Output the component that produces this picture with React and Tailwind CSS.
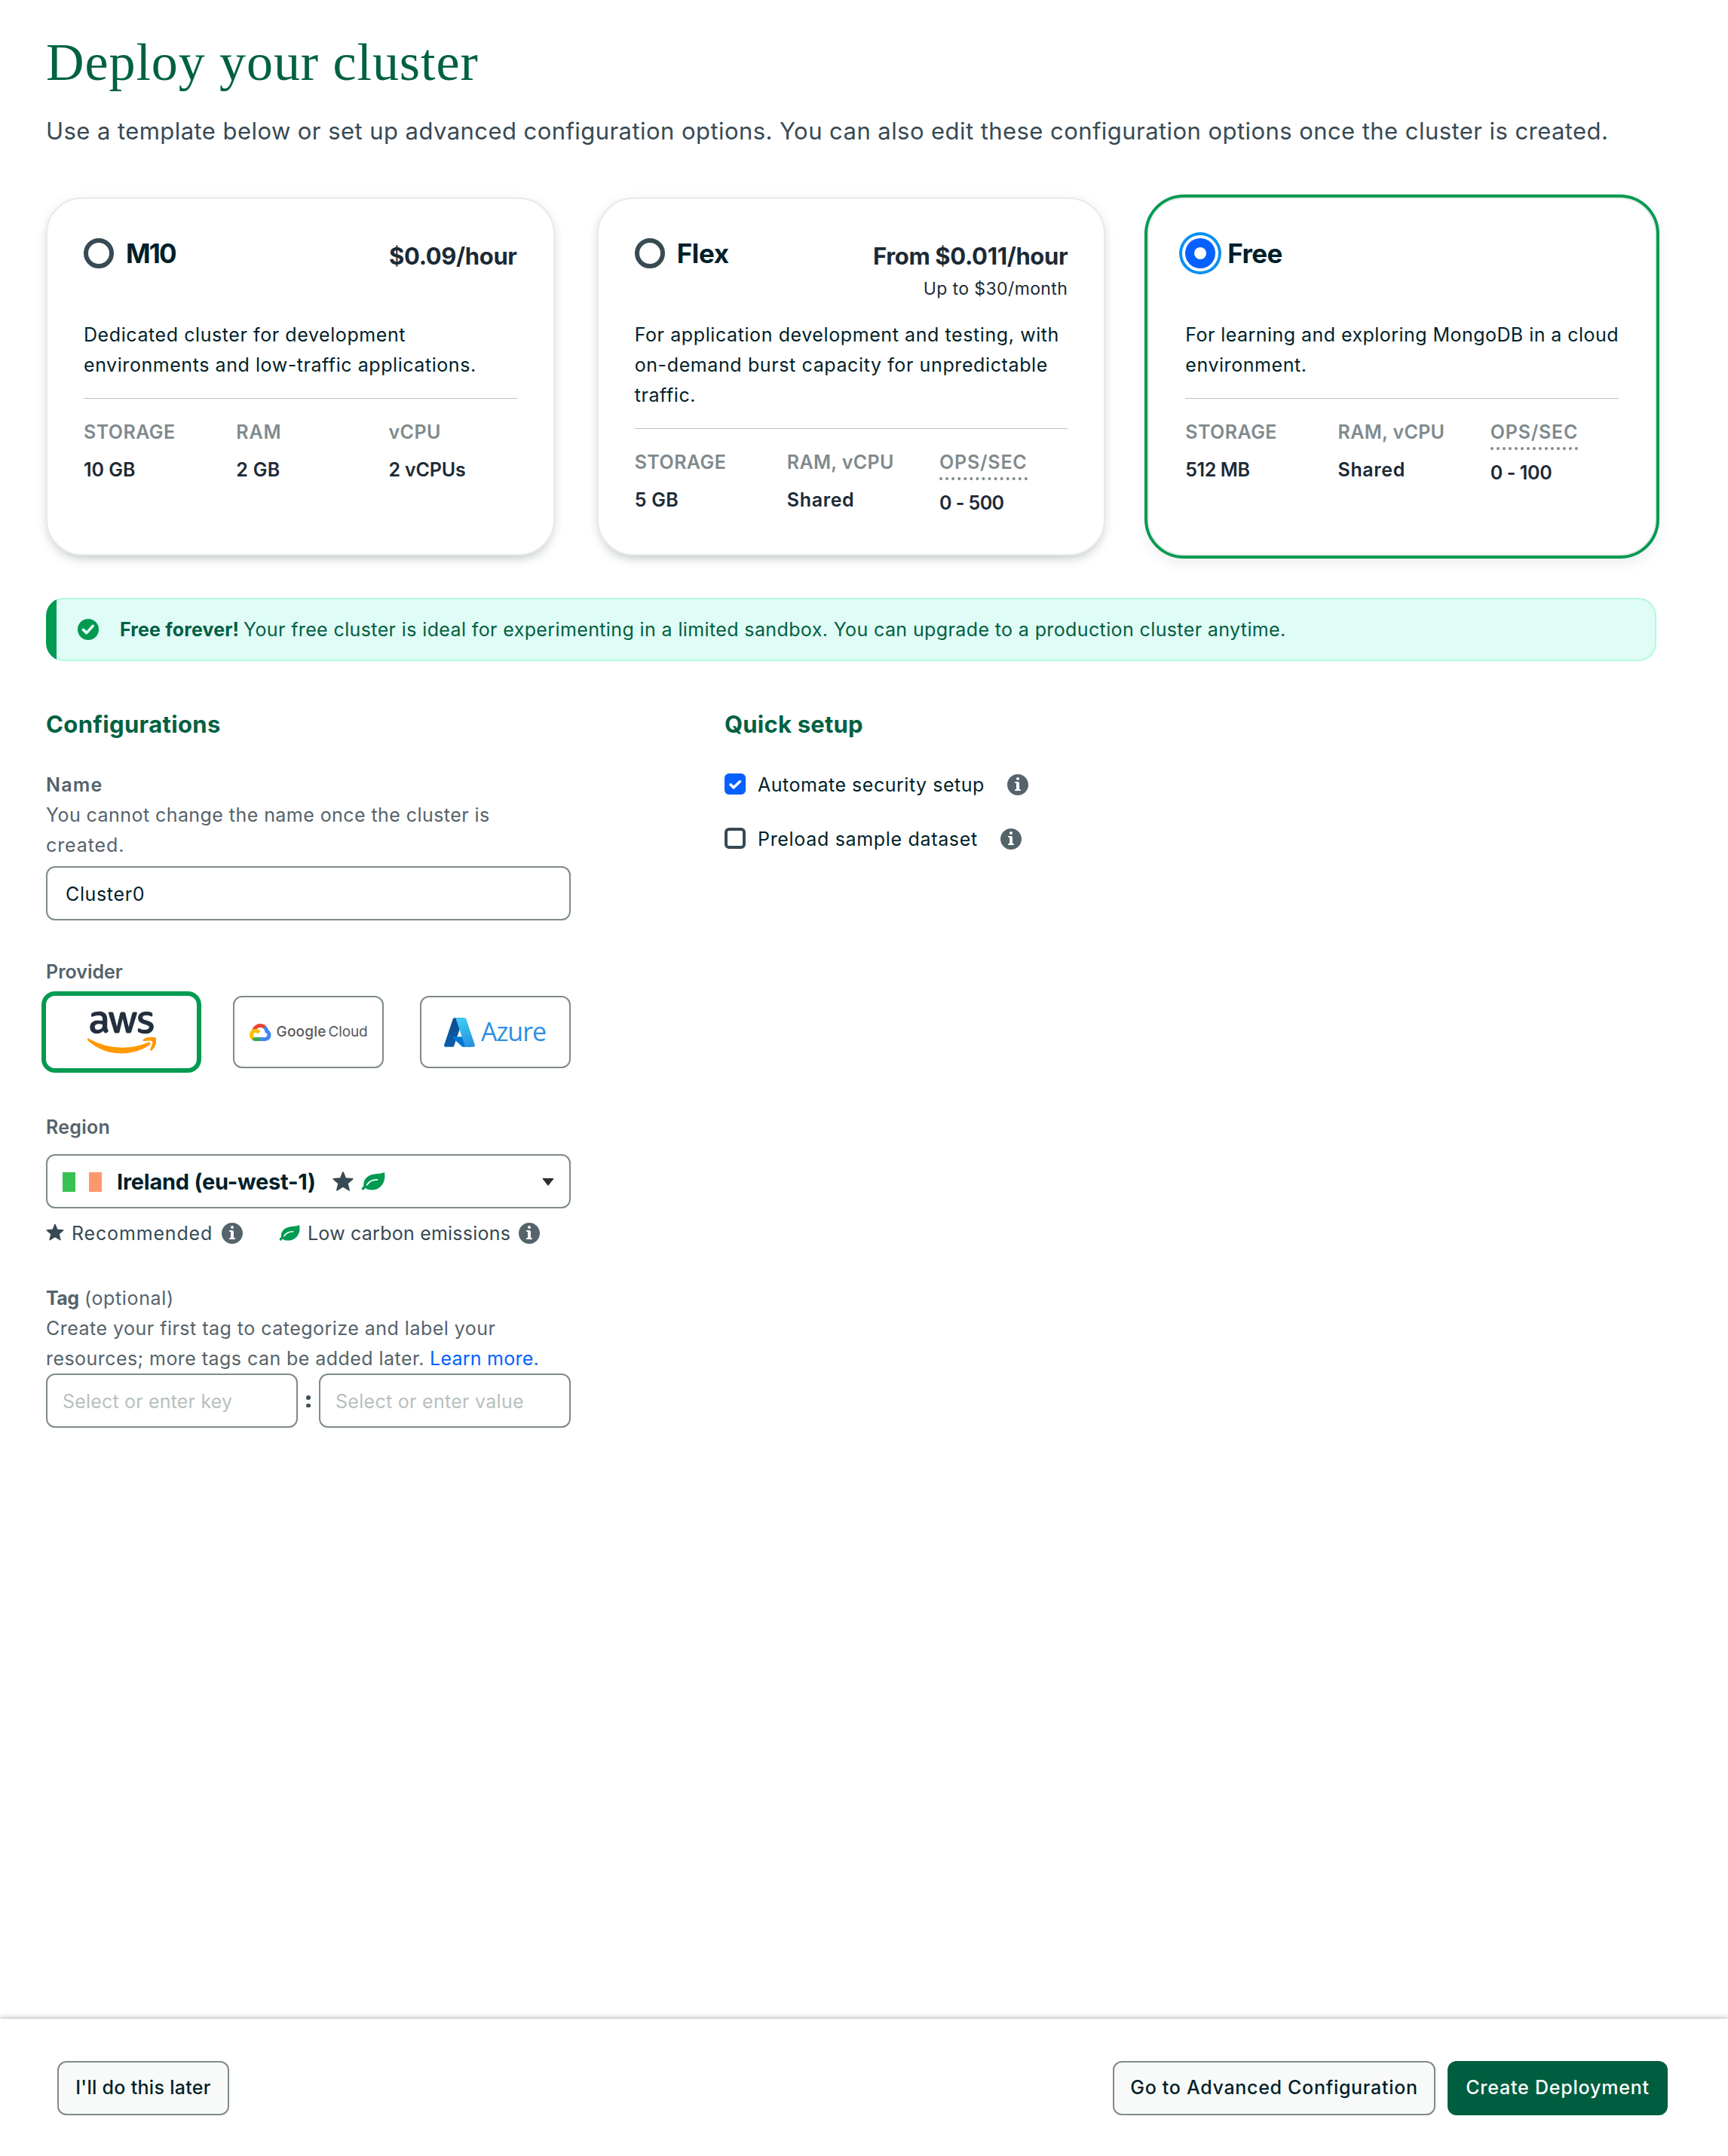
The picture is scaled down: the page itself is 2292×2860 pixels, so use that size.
import { FaAws } from "react-icons/fa6";

function InfoIcon({ className = "" }) {
  return (
    <svg viewBox="1 1 14 14" className={`size-7 shrink-0 fill-[#55636b] ${className}`}>
      <path
        fillRule="evenodd"
        clipRule="evenodd"
        d="M8 15C11.866 15 15 11.866 15 8C15 4.134 11.866 1 8 1C4.134 1 1 4.134 1 8C1 11.866 4.134 15 8 15ZM9 4C9 4.552 8.552 5 8 5C7.448 5 7 4.552 7 4C7 3.448 7.448 3 8 3C8.552 3 9 3.448 9 4ZM8 6C8.552 6 9 6.448 9 7V11H9.5C9.776 11 10 11.224 10 11.5C10 11.776 9.776 12 9.5 12H6.5C6.224 12 6 11.776 6 11.5C6 11.224 6.224 11 6.5 11H7V7H6.5C6.224 7 6 6.776 6 6.5C6 6.224 6.224 6 6.5 6H8Z"
      />
    </svg>
  );
}

function StarIcon({ className = "" }) {
  return (
    <svg viewBox="0 0 28 26" className={`shrink-0 ${className}`}>
      <path
        d="M14 1.2 17.2 9.2 26.6 10 19.8 15.8 22 24.8 14 19.8 6 24.8 8.2 15.8 1.4 10 10.8 9.2Z"
        fill="#384a54"
        stroke="#384a54"
        strokeWidth="1.8"
        strokeLinejoin="round"
      />
    </svg>
  );
}

function LeafIcon({ className = "" }) {
  return (
    <svg viewBox="0 0 32 24" className={`shrink-0 ${className}`}>
      <path
        d="M30.9.6C31 .1 30.4-.1 30 .3 27.2 2.4 21.5 1.4 15 3 7.5 4.8 2.4 10.6 3.4 18.2 1.9 19.4.9 20.7.7 21.9.5 23.8 3.4 24.2 4.2 22.6L5.2 21C9.6 24.2 17 24.4 22.4 21.4 30 17.2 32.6 8.6 30.9.6Z"
        fill="#009a50"
      />
      <path d="M7.8 16.8C10.2 12.6 14.8 9.9 21.4 9.9" fill="none" stroke="#fff" strokeWidth="1.8" strokeLinecap="round" />
    </svg>
  );
}

function GoogleCloudMark() {
  return (
    <svg viewBox="0 0 256 206" className="h-[23px] w-[28.5px] shrink-0">
      <path fill="#EA4335" d="M170.252 56.819 192.505 34.566 193.988 25.196C153.437-11.677 88.976-7.496 52.421 33.92 42.267 45.423 34.734 59.764 30.717 74.573L38.687 73.45 83.192 66.111 86.628 62.597C106.425 40.855 139.898 37.93 162.756 56.429Z" />
      <path fill="#4285F4" d="M224.205 73.918C219.09 55.082 208.589 38.149 193.988 25.196L162.756 56.428C175.944 67.204 183.457 83.438 183.135 100.465V106.009C198.486 106.009 210.932 118.454 210.932 133.805 210.932 149.157 198.486 161.29 183.135 161.29H127.464L121.998 167.224V200.564L127.464 205.795H183.135C223.065 206.106 255.687 174.301 255.998 134.371 256.186 110.168 244.253 87.478 224.205 73.918" />
      <path fill="#34A853" d="M71.87 205.796H127.463V161.29H71.87C67.909 161.289 64.073 160.438 60.471 158.792L52.584 161.212 30.175 183.465 28.223 191.039C40.79 200.528 56.123 205.864 71.87 205.796" />
      <path fill="#FBBC05" d="M71.87 61.426C31.939 61.664-.237 94.228.001 134.158.134 156.456 10.548 177.446 28.223 191.039L60.471 158.792C46.48 152.471 40.263 136.006 46.584 122.016 52.904 108.026 69.37 101.809 83.359 108.129 89.524 110.914 94.461 115.852 97.246 122.016L129.494 89.769C115.773 71.832 94.453 61.345 71.87 61.426" />
    </svg>
  );
}

function AzureMark() {
  return (
    <svg viewBox="4 6.5 88 83" className="h-[39px] w-[41px] shrink-0">
      <defs>
        <linearGradient id="az1" x1="60.9" y1="9.6" x2="18.7" y2="134.4" gradientUnits="userSpaceOnUse">
          <stop offset="0" stopColor="#114a8b" />
          <stop offset="1" stopColor="#0669bc" />
        </linearGradient>
        <linearGradient id="az2" x1="46" y1="10" x2="82" y2="86" gradientUnits="userSpaceOnUse">
          <stop offset="0" stopColor="#3ccbf4" />
          <stop offset="1" stopColor="#2892df" />
        </linearGradient>
      </defs>
      <path fill="url(#az1)" d="M33.338 6.544h26.038l-27.03 80.087a4.152 4.152 0 0 1-3.933 2.824H8.149a4.145 4.145 0 0 1-3.928-5.47L29.404 9.368a4.152 4.152 0 0 1 3.934-2.825z" />
      <path fill="#0078d4" d="M71.175 60.261h-41.29a1.911 1.911 0 0 0-1.305 3.309l26.532 24.764a4.171 4.171 0 0 0 2.846 1.121h23.38z" />
      <path fill="url(#az2)" d="M66.595 9.364a4.145 4.145 0 0 0-3.928-2.82H33.648a4.146 4.146 0 0 1 3.928 2.82l25.184 74.62a4.146 4.146 0 0 1-3.928 5.472h29.02a4.146 4.146 0 0 0 3.927-5.472z" />
    </svg>
  );
}

function Radio({ selected }) {
  return selected ? (
    <span className="flex size-10 items-center justify-center rounded-full bg-[#0560ff] shadow-[0_0_0_4px_#fff,0_0_0_8px_#0a90f0]">
      <span className="size-4 rounded-full bg-white" />
    </span>
  ) : (
    <span className="size-10 rounded-full border-6 border-[#384a54] bg-white" />
  );
}

function TierCard({ name, nameClass, price, note, lines, stats, selected }) {
  return (
    <section
      className={`h-[475px] flex-1 rounded-[48px] border-2 border-[#e6ebe9] bg-white px-12 pt-[47px] ${
        selected
          ? "shadow-[0_0_0_4px_#009a50,0_8px_20px_rgba(0,30,43,0.1)]"
          : "shadow-[0_8px_16px_-6px_rgba(0,30,43,0.26),0_0_16px_rgba(0,30,43,0.05)]"
      }`}
    >
      <div className="flex h-[113px] items-start justify-between">
        <label className="flex h-[50px] items-center gap-4">
          <Radio selected={selected} />
          <span className={`text-[35px] font-bold ${nameClass}`}>{name}</span>
        </label>
        {price && (
          <div className="pt-[9px] text-right text-[#1c2a36]">
            {price}
            {note}
          </div>
        )}
      </div>
      <div className="text-[25px] leading-10 whitespace-nowrap">{lines}</div>
      <div className="mt-6 h-px bg-[#b8c3c0]" />
      <dl className="mt-6 grid grid-cols-3 gap-8 text-[25px] leading-10 font-semibold whitespace-nowrap">
        {stats.map(([label, labelClass, value, valueClass]) => (
          <div key={label} className="flex flex-col items-start">
            <dt className={`text-[#7f8a8d] ${labelClass}`}>{label}</dt>
            <dd className={`mt-2.5 text-[#1c2a36] ${valueClass}`}>{value}</dd>
          </div>
        ))}
      </dl>
    </section>
  );
}

const button = "flex h-[72px] items-center justify-center rounded-xl text-[25px] font-medium whitespace-nowrap";
const field = "flex h-[72px] items-center rounded-xl border-2 border-[#7f8a8c] bg-white pt-0.5 text-[25px] whitespace-nowrap";
const opsLabel = "border-b-4 border-dotted border-[#7f8a8d] tracking-[0.8px]";

export default function App() {
  return (
    <div className="flex min-h-[2860px] w-[2292px] flex-col bg-white font-['Inter',sans-serif] text-[#001f2a]">
      <main className="ml-[61px] w-[2136px] grow pt-[43px]">
        <h1 className="font-['Liberation_Serif',serif] text-[70px] leading-20 tracking-[0.93px] text-[#006142]">
          Deploy your cluster
        </h1>
        <p className="mt-[23px] text-[31px] leading-14 tracking-[0.439px] whitespace-nowrap text-[#384a54]">
          Use a template below or set up advanced configuration options. You can also edit these configuration options
          once the cluster is created.
        </p>

        <div className="mt-[60px] flex gap-14">
          <TierCard
            name="M10"
            nameClass="tracking-[-1.8px]"
            price={<div className="text-[31px] leading-10 font-bold tracking-[-0.35px]">$0.09/hour</div>}
            lines={
              <>
                <div className="tracking-[0.58px]">Dedicated cluster for development</div>
                <div className="tracking-[0.56px]">environments and low-traffic applications.</div>
              </>
            }
            stats={[
              ["STORAGE", "tracking-[0.43px]", "10 GB", ""],
              ["RAM", "tracking-[0.95px]", "2 GB", "tracking-[0.3px]"],
              ["vCPU", "tracking-[0.43px]", "2 vCPUs", "tracking-[-0.17px]"],
            ]}
          />
          <TierCard
            name="Flex"
            nameClass="tracking-[-0.39px]"
            price={<div className="text-[31px] leading-10 font-bold tracking-[-0.34px]">From $0.011/hour</div>}
            note={<div className="mt-[3px] text-[23px] leading-10 tracking-[0.4px]">Up to $30/month</div>}
            lines={
              <>
                <div className="tracking-[0.59px]">For application development and testing, with</div>
                <div className="tracking-[0.61px]">on-demand burst capacity for unpredictable</div>
                <div className="tracking-[0.59px]">traffic.</div>
              </>
            }
            stats={[
              ["STORAGE", "tracking-[0.43px]", "5 GB", "tracking-[0.25px]"],
              ["RAM, vCPU", "tracking-[0.32px]", "Shared", "tracking-[0.64px]"],
              ["OPS/SEC", opsLabel, "0 - 500", "tracking-[-0.57px]"],
            ]}
          />
          <TierCard
            selected
            name="Free"
            nameClass="tracking-[-0.6px]"
            lines={
              <>
                <div className="tracking-[0.45px]">For learning and exploring MongoDB in a cloud</div>
                <div className="tracking-[0.56px]">environment.</div>
              </>
            }
            stats={[
              ["STORAGE", "tracking-[0.43px]", "512 MB", "tracking-[-0.4px]"],
              ["RAM, vCPU", "tracking-[0.32px]", "Shared", "tracking-[0.64px]"],
              ["OPS/SEC", opsLabel, "0 - 100", "tracking-[-0.4px]"],
            ]}
          />
        </div>

        <div className="mt-14 rounded-3xl bg-[linear-gradient(to_right,#009a50_14px,#b4f8e0_14px)] p-0.5">
          <div className="flex h-20 items-center rounded-[22px] bg-[linear-gradient(to_right,#009a50_12px,#e0fcf6_12px)] pl-10 text-[25px] leading-10 whitespace-nowrap text-[#005f42]">
            <svg viewBox="0 0 14 14" className="size-7 shrink-0">
              <circle cx="7" cy="7" r="7" fill="#009a50" />
              <path d="M3.7 7.2 5.9 9.3 10.1 4.7" fill="none" stroke="#e0fcf6" strokeWidth="1.8" strokeLinecap="round" strokeLinejoin="round" />
            </svg>
            <strong className="ml-7 w-[164px] font-bold tracking-[0.14px]">Free forever!</strong>
            <span className="tracking-[0.379px]">
              Your free cluster is ideal for experimenting in a limited sandbox. You can upgrade to a production cluster
              anytime.
            </span>
          </div>
        </div>

        <div className="mt-[60px] flex">
          <section className="w-[696px] text-[25px] leading-10 whitespace-nowrap text-[#55636b]">
            <h2 className="text-[31px] leading-12 font-bold tracking-[0.355px] text-[#006142]">Configurations</h2>

            <div className="mt-9 font-semibold tracking-[1.2px]">Name</div>
            <div className="tracking-[0.436px]">You cannot change the name once the cluster is</div>
            <div className="tracking-[0.9px]">created.</div>
            <div className={`mt-2 pl-6 tracking-[0.64px] text-[#001f2a] ${field}`}>Cluster0</div>

            <div className="mt-12 font-semibold">Provider</div>
            <div className="mt-3 flex gap-12">
              <div className="flex h-24 w-50 items-center justify-center rounded-xl bg-white shadow-[0_0_0_6px_#009a50]">
                <svg className="size-0">
                  <linearGradient id="aws" x1="0" y1="0" x2="0" y2="1">
                    <stop offset="0.57" stopColor="#232f3e" />
                    <stop offset="0.57" stopColor="#ff9900" />
                  </linearGradient>
                </svg>
                <FaAws fill="url(#aws)" stroke="url(#aws)" strokeWidth="8" className="h-[73px] w-[91px]" />
              </div>
              <div className="flex h-24 w-50 items-center rounded-xl border-2 border-[#7f8a8c] pl-5 text-[19px] leading-6 text-[#58595d]">
                <GoogleCloudMark />
                <span className="ml-[7px] font-medium tracking-[0.2px]">Google</span>
                <span className="ml-[3px] tracking-[-0.15px]">Cloud</span>
              </div>
              <div className="flex h-24 w-50 items-center rounded-xl border-2 border-[#7f8a8c] pl-[30px]">
                <AzureMark />
                <span className="ml-2 pb-0.5 font-['Open_Sans',sans-serif] text-[34px] tracking-[-1.05px] text-[#2e8fe2]">
                  Azure
                </span>
              </div>
            </div>

            <div className="mt-[58px] font-semibold tracking-[0.28px]">Region</div>
            <div className={`mt-4 pr-5 pl-5 text-[#001f2a] ${field}`}>
              <span className="flex h-[26px] w-[52px] justify-between">
                <span className="w-[17px] bg-[#38c152]" />
                <span className="w-[17px] bg-[#fc986e]" />
              </span>
              <span className="ml-5 text-[29px] font-bold tracking-[-0.25px]">Ireland (eu-west-1)</span>
              <StarIcon className="mb-0.5 ml-[22px] h-[26px] w-7" />
              <LeafIcon className="mb-0.5 ml-2.5 h-6 w-8" />
              <svg viewBox="0 0 16 10" className="ml-auto h-2.5 w-4">
                <path d="M1 .5h14L8 9.5z" fill="#2d2d2d" stroke="#2d2d2d" strokeLinejoin="round" />
              </svg>
            </div>
            <div className="mt-[13px] flex items-center text-[#384a54]">
              <StarIcon className="mb-[3px] h-[23px] w-6" />
              <span className="ml-2.5 w-[199px] tracking-[0.84px]">Recommended</span>
              <InfoIcon />
              <LeafIcon className="mb-0.5 ml-12 h-[21px] w-7" />
              <span className="ml-2.5 w-[280px] tracking-[0.228px]">Low carbon emissions</span>
              <InfoIcon />
            </div>

            <div className="mt-[46px] flex">
              <strong className="w-[51px] font-bold tracking-[-0.6px]">Tag</strong>
              <span className="tracking-[0.64px]">(optional)</span>
            </div>
            <div className="tracking-[0.48px]">Create your first tag to categorize and label your</div>
            <div className="flex">
              <span className="w-[509px] tracking-[0.447px]">resources; more tags can be added later.</span>
              <a className="tracking-[0.25px] text-[#0560ff]">Learn more.</a>
            </div>
            <div className="flex items-center justify-between">
              <div className={`w-[334px] pl-5 tracking-[0.183px] text-[#b8c0be] ${field}`}>Select or enter key</div>
              <span className="flex flex-col gap-[5px] pt-0.5">
                <span className="size-[5.5px] rounded-full bg-[#3d4f58]" />
                <span className="size-[5.5px] rounded-full bg-[#3d4f58]" />
              </span>
              <div className={`w-[334px] pl-5 tracking-[0.286px] text-[#b8c0be] ${field}`}>Select or enter value</div>
            </div>
          </section>

          <section className="ml-[204px] text-[25px] leading-10 whitespace-nowrap">
            <h2 className="text-[31px] leading-12 font-bold tracking-[0.217px] text-[#006142]">Quick setup</h2>
            <div className="mt-9 flex items-start">
              <svg viewBox="0 0 28 28" className="mt-[5px] size-7">
                <rect width="28" height="28" rx="6" fill="#0560ff" />
                <path d="M8 14.8 12 18.8 20.4 10.8" fill="none" stroke="#fff" strokeWidth="3.6" strokeLinecap="round" strokeLinejoin="round" />
              </svg>
              <span className="ml-4 tracking-[0.518px]">Automate security setup</span>
              <InfoIcon className="mt-1.5 ml-[30px]" />
            </div>
            <div className="mt-8 flex items-start">
              <span className="mt-[5px] size-7 rounded-md border-4 border-[#384a54]" />
              <span className="ml-4 tracking-[0.678px]">Preload sample dataset</span>
              <InfoIcon className="mt-1.5 ml-[30px]" />
            </div>
          </section>
        </div>
      </main>

      <footer className="flex h-[182px] items-start bg-white pt-14 pr-20 pl-[76px] shadow-[0_0_8px_rgba(0,0,0,0.38)]">
        <div className={`w-[228px] border-2 border-[#7f8a8c] bg-[#f8faf9] tracking-[0.3px] ${button}`}>
          I'll do this later
        </div>
        <div className={`ml-auto w-[428px] border-2 border-[#7f8a8c] bg-[#f8faf9] tracking-[0.7px] ${button}`}>
          Go to Advanced Configuration
        </div>
        <div className={`ml-4 w-[292px] bg-[#005e40] tracking-[0.79px] text-white ${button}`}>Create Deployment</div>
      </footer>
    </div>
  );
}
